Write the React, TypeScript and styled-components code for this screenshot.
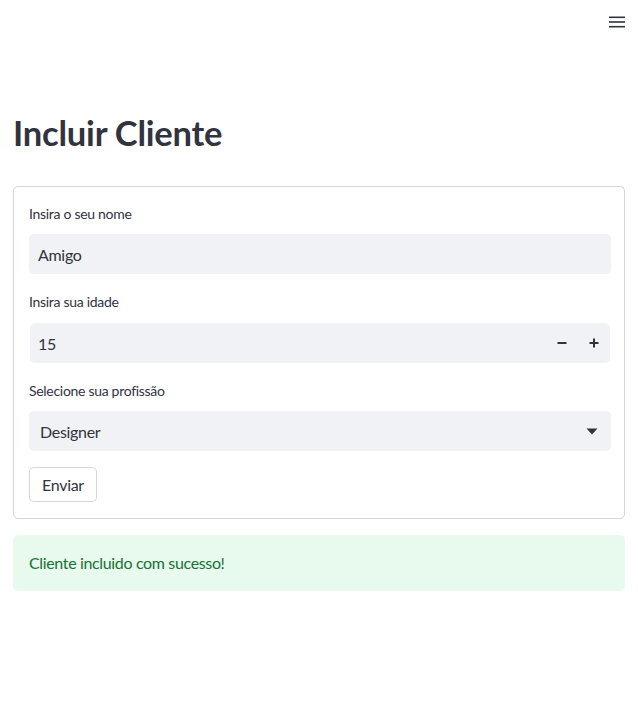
import React from "react";
import styled, { createGlobalStyle } from "styled-components";

const GlobalStyle = createGlobalStyle`
  html, body {
    margin: 0;
    padding: 0;
    background: #ffffff;
  }
  body {
    font-family: "Source Sans Pro", Lato, "Liberation Sans", sans-serif;
    color: rgb(49, 51, 63);
  }
  * { box-sizing: border-box; }
`;

const Page = styled.div`
  min-height: 714px;
  display: flex;
  flex-direction: column;
`;

const Header = styled.header`
  height: 44px;
  display: flex;
  justify-content: flex-end;
  align-items: center;
  padding: 0 13px 0 0;
`;

const MenuButton = styled.button`
  width: 16px;
  height: 16px;
  padding: 0;
  border: none;
  background: transparent;
  display: flex;
  align-items: center;
  justify-content: center;
  cursor: pointer;
`;

const Main = styled.main`
  padding: 64px 13px 0 13px;
  display: flex;
  flex-direction: column;
`;

const Title = styled.h1`
  margin: 0;
  font-size: 34.5px;
  font-weight: 700;
  line-height: 50px;
  color: rgb(49, 51, 63);
  letter-spacing: -0.2px;
`;

const Form = styled.form`
  margin-top: 28px;
  border: 1px solid rgba(49, 51, 63, 0.2);
  border-radius: 5px;
  padding: 15px 13px 16px 15px;
  display: flex;
  flex-direction: column;
  gap: 16px;
`;

const Field = styled.div`
  display: flex;
  flex-direction: column;
`;

const Label = styled.label`
  font-size: 14px;
  line-height: 24px;
  height: 24px;
  margin-bottom: 8px;
  letter-spacing: -0.3px;
  color: rgb(49, 51, 63);
`;

const InputBox = styled.div<{ $inset?: boolean }>`
  height: 40px;
  background: rgb(240, 242, 246);
  border-radius: 5px;
  display: flex;
  align-items: center;
  margin: ${(p) => (p.$inset ? "1px 1px 0 1px" : "0")};
`;

const TextValue = styled.span<{ $pad?: number }>`
  flex: 1;
  font-size: 16px;
  letter-spacing: -0.3px;
  padding-left: ${(p) => p.$pad ?? 9}px;
  color: rgb(49, 51, 63);
`;

const StepButton = styled.button`
  width: 32px;
  height: 100%;
  border: none;
  background: transparent;
  display: flex;
  align-items: center;
  justify-content: center;
  padding: 0;
  cursor: pointer;
`;

const Arrow = styled.div`
  width: 32px;
  display: flex;
  align-items: center;
  justify-content: center;
  margin-right: 3px;
`;

const SubmitButton = styled.button`
  align-self: flex-start;
  height: 35px;
  padding: 0 12px;
  background: #ffffff;
  border: 1px solid rgba(49, 51, 63, 0.2);
  border-radius: 5px;
  font-family: inherit;
  font-size: 16px;
  letter-spacing: -0.3px;
  color: rgb(49, 51, 63);
`;

const Alert = styled.div`
  margin-top: 16px;
  background: rgba(33, 195, 84, 0.1);
  border-radius: 5px;
  padding: 16px;
  font-size: 16px;
  line-height: 24px;
  letter-spacing: -0.35px;
  color: rgb(23, 114, 51);
`;

export default function App() {
  return (
    <Page>
      <GlobalStyle />
      <Header>
        <MenuButton aria-label="menu">
          <svg width="16" height="12" viewBox="0 0 16 12">
            <rect x="0" y="0.5" width="16" height="1.6" fill="rgb(49,51,63)" />
            <rect x="0" y="5.2" width="16" height="1.6" fill="rgb(49,51,63)" />
            <rect x="0" y="9.9" width="16" height="1.6" fill="rgb(49,51,63)" />
          </svg>
        </MenuButton>
      </Header>
      <Main>
        <Title>Incluir Cliente</Title>
        <Form onSubmit={(e) => e.preventDefault()}>
          <Field>
            <Label>Insira o seu nome</Label>
            <InputBox>
              <TextValue>Amigo</TextValue>
            </InputBox>
          </Field>
          <Field>
            <Label>Insira sua idade</Label>
            <InputBox $inset>
              <TextValue $pad={8}>15</TextValue>
              <StepButton aria-label="minus">
                <svg width="10" height="10" viewBox="0 0 10 10">
                  <rect x="0.5" y="4" width="9" height="2" fill="rgb(49,51,63)" />
                </svg>
              </StepButton>
              <StepButton aria-label="plus">
                <svg width="10" height="10" viewBox="0 0 10 10">
                  <rect x="0.5" y="4" width="9" height="2" fill="rgb(49,51,63)" />
                  <rect x="4" y="0.5" width="2" height="9" fill="rgb(49,51,63)" />
                </svg>
              </StepButton>
            </InputBox>
          </Field>
          <Field>
            <Label>Selecione sua profissão</Label>
            <InputBox>
              <TextValue $pad={11}>Designer</TextValue>
              <Arrow>
                <svg width="12" height="7" viewBox="0 0 12 7">
                  <path d="M0.5 0.5 H11.5 L6 6.5 Z" fill="rgb(49,51,63)" />
                </svg>
              </Arrow>
            </InputBox>
          </Field>
          <SubmitButton type="submit">Enviar</SubmitButton>
        </Form>
        <Alert>Cliente incluido com sucesso!</Alert>
      </Main>
    </Page>
  );
}
